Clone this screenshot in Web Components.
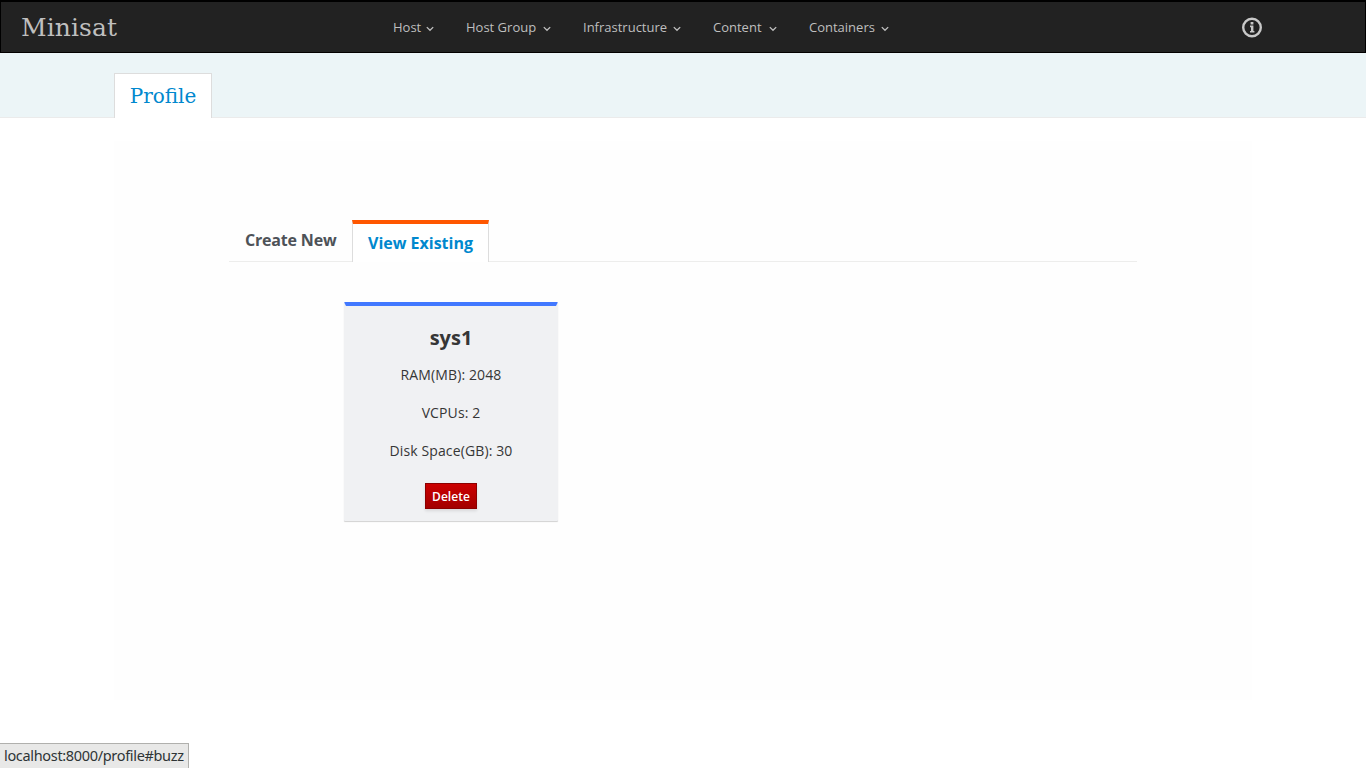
<!DOCTYPE html>
<html lang="en">
<head>
<meta charset="utf-8">
<title>Minisat</title>
<style>
html, body { margin: 0; height: 100%; overflow: hidden; background: #fff; }
body { font-family: "Open Sans", "Noto Sans", sans-serif; color: #363636; }
</style>
</head>
<body>
<minisat-app></minisat-app>
<script>
const define = (name, html) => customElements.define(name, class extends HTMLElement {
  constructor() {
    super();
    const t = document.createElement('template');
    t.innerHTML = html;
    this.attachShadow({ mode: 'open' }).appendChild(t.content.cloneNode(true));
  }
});

define('nav-item', `
<style>
:host { display: flex; align-items: center; font-size: 13px; line-height: 18px; color: #bfbfbf; white-space: nowrap; }
span { width: var(--label); }
svg { display: block; margin: 4px 0 0 var(--gap, 7px); }
</style>
<span><slot></slot></span>
<svg width="8" height="6" viewBox="0 0 8 6"><path d="M.8 1.1 4 4.3 7.2 1.1" fill="none" stroke="#bfbfbf" stroke-width="1.3"/></svg>`);

define('top-bar', `
<style>
:host { display: flex; align-items: center; box-sizing: border-box; height: 53px; border: 1px solid #000; border-top-width: 2px; border-bottom-color: #030000; background: #222; padding: 0 103px 0 20px; }
.brand { font: 25px/32px "DejaVu Serif", serif; color: #bfbfbf; width: 372px; margin-top: 2px; letter-spacing: .08px; }
nav { display: flex; gap: 32px; flex: 1; }
</style>
<div class="brand">Minisat</div>
<nav>
<nav-item style="--label:29px;--gap:4px">Host</nav-item>
<nav-item style="--label:70px">Host Group</nav-item>
<nav-item style="--label:83px">Infrastructure</nav-item>
<nav-item style="--label:49px">Content</nav-item>
<nav-item style="--label:65px">Containers</nav-item>
</nav>
<svg class="info" width="20" height="21" viewBox="0 0 20 21"><circle cx="10" cy="10.5" r="8.8" fill="none" stroke="#c8c8c8" stroke-width="2.4"/><path d="M8.6 5h2.8v2.4H8.6zM8 8.6h3.4V14h1v1.6H8V14h1v-3.8H8z" fill="#c8c8c8"/></svg>`);

define('page-tabs', `
<style>
:host { display: flex; align-items: flex-end; box-sizing: border-box; height: 65px; padding-left: 114px; background: #ecf5f7; border-bottom: 1px solid #ebebeb; }
div { box-sizing: border-box; width: 98px; height: 45px; margin-bottom: -1px; border: 1px solid #ddd; border-bottom: 0; border-radius: 1px 1px 0 0; background: #fff; color: #0088ce; font: 20px/44px "DejaVu Serif", serif; text-align: center; }
</style>
<div><slot></slot></div>`);

define('section-tabs', `
<style>
:host { display: flex; align-items: flex-end; height: 41px; border-bottom: 1px solid #ededec; font-size: 16px; font-weight: 700; line-height: 22px; white-space: nowrap; }
.idle { width: 92px; padding: 0 15px 10px 16px; color: #4d5258; letter-spacing: -.18px; }
.active { box-sizing: border-box; width: 137px; height: 42px; margin-bottom: -1px; padding-top: 8px; border: 1px solid #ddd; border-top: 4px solid #ff5700; border-bottom: 0; background: #fff; color: #0088ce; text-align: center; }
</style>
<div class="idle">Create New</div><div class="active">View Existing</div>`);

define('profile-card', `
<style>
:host { display: flex; flex-direction: column; align-items: center; box-sizing: border-box; width: 214px; height: 219px; border: 2px solid transparent; border-top: 4px solid #4178ff; border-bottom: 0; border-radius: 1px; background: #f0f1f3; background-clip: border-box; box-shadow: 0 1px 1px rgba(0,0,0,.175); }
h2 { margin: 18px 0 13px; font-size: 20px; line-height: 28px; font-weight: 700; }
p { margin: 0 0 18px; font-size: 14px; line-height: 20px; letter-spacing: .12px; }
p:last-of-type { margin-bottom: 22px; }
</style>
<h2><slot name="title"></slot></h2>
<p>RAM(MB): 2048</p><p>VCPUs: 2</p><p>Disk Space(GB): 30</p>
<slot name="action"></slot>`);

define('delete-button', `
<style>
:host { display: block; width: 52px; }
button { display: block; box-sizing: border-box; width: 52px; height: 26px; padding: 1px 0 0; border: 1px solid #8b0000; border-radius: 0; background: linear-gradient(#c00, #a30000); box-shadow: 0 2px 3px rgba(3,3,3,.1); color: #fff; font: 600 12px/23px "Open Sans", sans-serif; letter-spacing: .05px; }
</style>
<button><slot></slot></button>`);

define('status-bubble', `
<style>
:host { position: absolute; left: 0; bottom: 0; box-sizing: border-box; width: 189px; height: 25px; padding-left: 4px; border: 1px solid #b0b0ad; border-left: 0; border-bottom: 0; background: #e8e8e7; color: #2e3436; font: 14.5px/22px "Noto Sans", sans-serif; letter-spacing: -.33px; white-space: nowrap; }
</style>
<span><slot></slot></span>`);

define('minisat-app', `
<style>
:host { display: block; position: relative; height: 768px; overflow: hidden; }
main { box-sizing: border-box; width: 1138px; height: 559px; margin: 23px 0 0 114px; padding: 79px 115px 0; background: #fefefe; }
profile-card { margin: 40px 0 0 115px; }
</style>
<top-bar></top-bar>
<page-tabs>Profile</page-tabs>
<main>
<section-tabs></section-tabs>
<profile-card><span slot="title">sys1</span><delete-button slot="action">Delete</delete-button></profile-card>
</main>
<status-bubble>localhost:8000/profile#buzz</status-bubble>`);
</script>
</body>
</html>
